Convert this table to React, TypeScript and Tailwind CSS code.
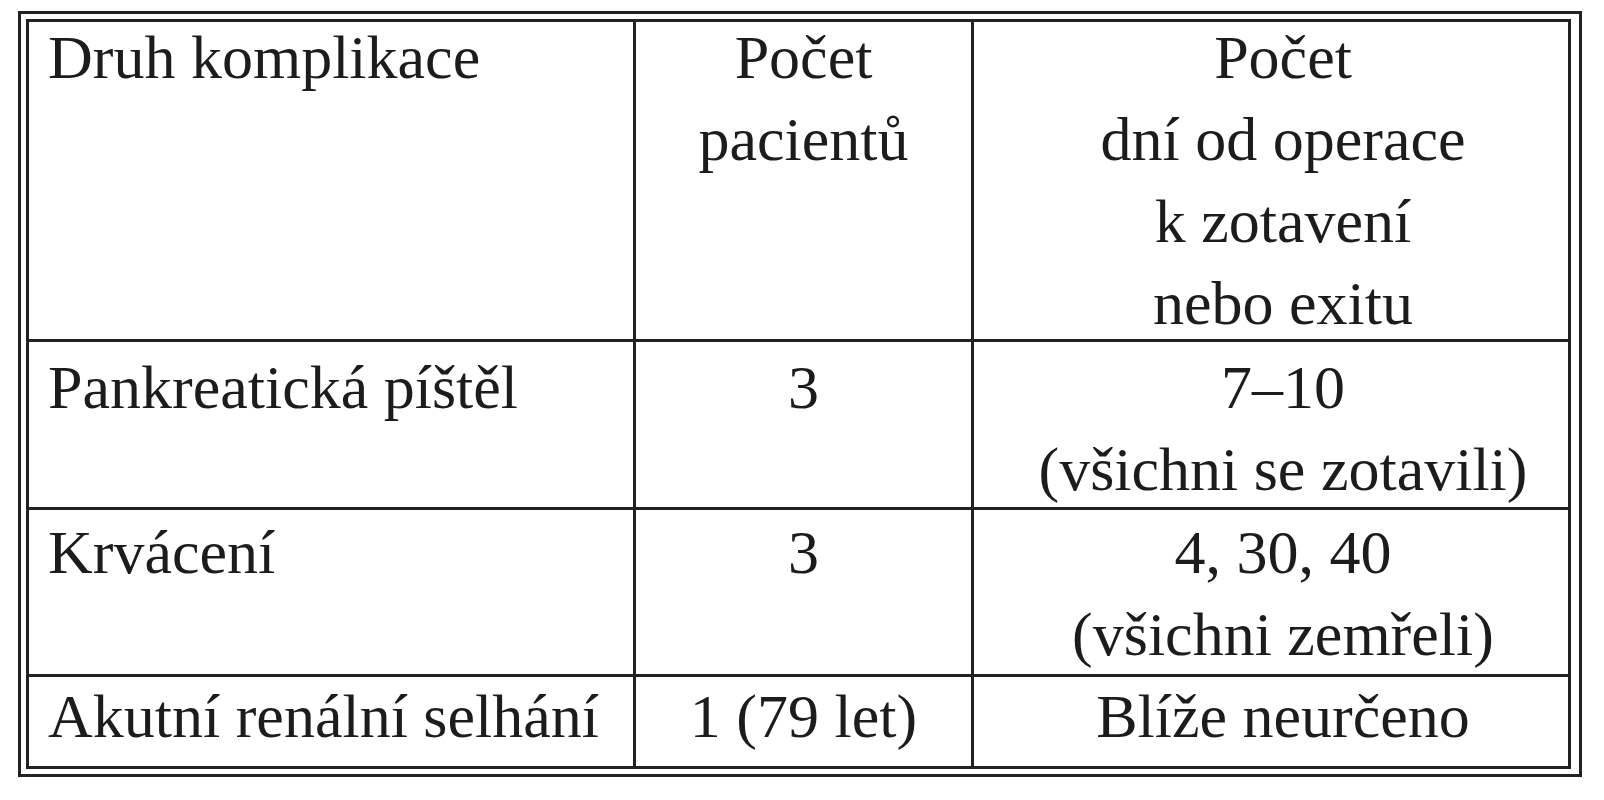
const rows = [
  { name: "Pankreatická píštěl", count: "3", days: ["7–10", "(všichni se zotavili)"], h: "h-[168px]", pad: "pt-[4px]" },
  { name: "Krvácení", count: "3", days: ["4, 30, 40", "(všichni zemřeli)"], h: "h-[167px]", pad: "pt-[1px]" },
];

export default function App() {
  return (
    <div className="min-h-screen bg-white pt-[11px] pl-[18px] text-[#1c1c1c] font-['Liberation_Serif','Times_New_Roman',serif] text-[62px] leading-[82px]">
      <div className="w-[1564px] border-[3px] border-[#222] pt-[5px] pb-[5px] pl-[5px] pr-[8px]">
        <div className="border-[3px] border-[#222] grid grid-cols-[607px_338px_594px]">
          {/* header */}
          <div className="h-[320px] border-r-[3px] border-b-[3px] border-[#222] pl-[19px]">
            <div className="-mt-[6px]">Druh komplikace</div>
          </div>
          <div className="h-[320px] border-r-[3px] border-b-[3px] border-[#222] text-center">
            <div className="-mt-[6px]">
              <div>Počet</div>
              <div>pacientů</div>
            </div>
          </div>
          <div className="h-[320px] border-b-[3px] border-[#222] text-center pl-[24px]">
            <div className="-mt-[6px]">
              <div>Počet</div>
              <div>dní od operace</div>
              <div>k zotavení</div>
              <div>nebo exitu</div>
            </div>
          </div>

          {rows.map((r) => (
            <>
              <div key={r.name + "a"} className={`${r.h} ${r.pad} border-r-[3px] border-b-[3px] border-[#222] pl-[19px]`}>
                {r.name}
              </div>
              <div key={r.name + "b"} className={`${r.h} ${r.pad} border-r-[3px] border-b-[3px] border-[#222] text-center`}>
                {r.count}
              </div>
              <div key={r.name + "c"} className={`${r.h} ${r.pad} border-b-[3px] border-[#222] text-center pl-[24px]`}>
                {r.days.map((d) => (
                  <div key={d}>{d}</div>
                ))}
              </div>
            </>
          ))}

          {/* last row */}
          <div className="h-[89px] border-r-[3px] border-[#222] pl-[19px]">
            <div className="-mt-[2px]">Akutní renální selhání</div>
          </div>
          <div className="h-[89px] border-r-[3px] border-[#222] text-center">
            <div className="-mt-[2px]">1 (79 let)</div>
          </div>
          <div className="h-[89px] text-center pl-[24px]">
            <div className="-mt-[2px]">Blíže neurčeno</div>
          </div>
        </div>
      </div>
    </div>
  );
}
